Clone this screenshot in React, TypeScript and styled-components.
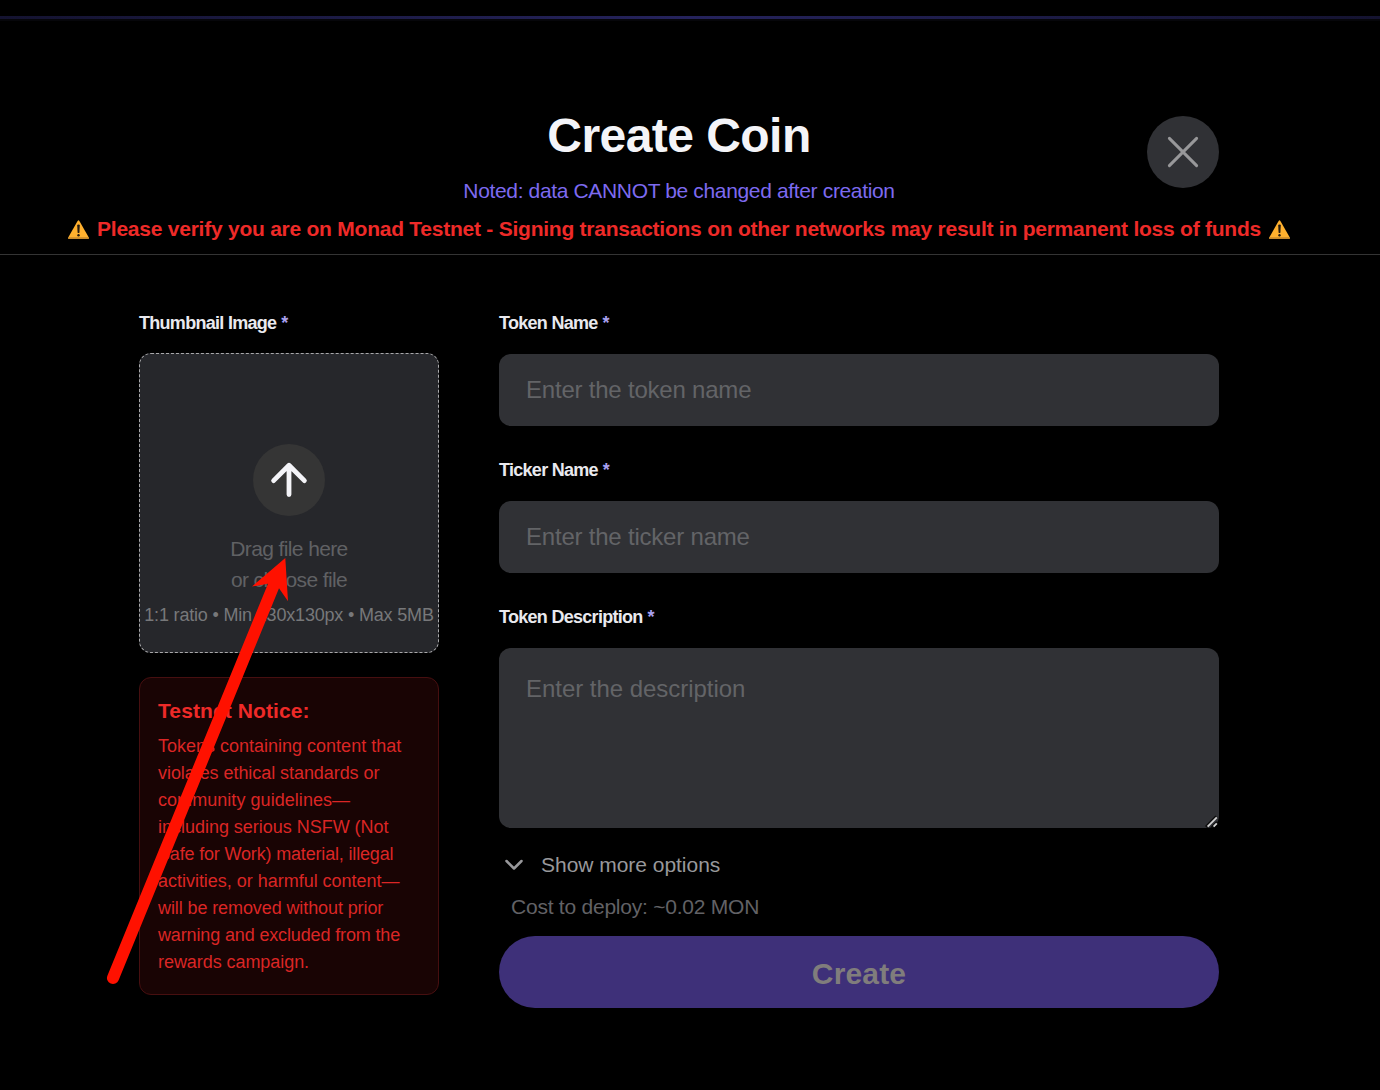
import styled, { createGlobalStyle } from "styled-components";

const GlobalStyle = createGlobalStyle`
  * {
    box-sizing: border-box;
  }

  body {
    margin: 0;
    background: #000;
    font-family: "Liberation Sans", Arial, sans-serif;
  }
`;

const Page = styled.div`
  position: relative;
  height: 1090px;
  padding-top: 16px;
  overflow: hidden;
  background: #000;
`;

const GlowLine = styled.div`
  height: 5px;
  border-bottom: 2px solid #06060a;
  background: linear-gradient(90deg, #141330 0%, #1d1c48 28%, #25235c 50%, #1d1c48 72%, #141330 100%);
`;

const Header = styled.header`
  padding: 87px 22px 10px 0;
  border-bottom: 1px solid #343434;
`;

const HeaderTop = styled.div`
  display: grid;
  grid-template-columns: 72px 1fr 72px;
  width: 1080px;
  margin: 0 auto;
`;

const Heading = styled.div`
  grid-column: 2;
  text-align: center;
`;

const Title = styled.h1`
  margin: 0;
  color: #f4f4f8;
  font-size: 48px;
  font-weight: 700;
  line-height: 56px;
  letter-spacing: -0.55px;
`;

const Subtitle = styled.p`
  margin: 11px 0 0;
  color: #7d6af0;
  font-size: 21px;
  line-height: 31px;
  letter-spacing: -0.35px;
`;

const CloseButton = styled.button`
  display: flex;
  align-items: center;
  justify-content: center;
  width: 72px;
  height: 72px;
  margin-top: 8px;
  padding: 0;
  border: none;
  border-radius: 50%;
  background: #303135;
`;

const Warning = styled.div`
  display: flex;
  align-items: center;
  justify-content: center;
  gap: 8px;
  margin-top: 7px;
  color: #ee2a28;
  font-size: 21px;
  font-weight: 700;
  line-height: 31px;
  letter-spacing: -0.242px;
  white-space: nowrap;

  svg {
    margin-top: 2px;
  }
`;

const Content = styled.main`
  display: flex;
  gap: 60px;
  width: 1080px;
  margin: 55px 0 0 139px;
`;

const Side = styled.div`
  display: flex;
  flex-direction: column;
  width: 300px;
`;

const Form = styled.form`
  display: flex;
  flex-direction: column;
  flex: 1;
`;

const Field = styled.div`
  display: flex;
  flex-direction: column;
  gap: 18px;
  margin-bottom: 31px;

  &:last-of-type {
    margin-bottom: 0;
  }
`;

const Label = styled.label`
  color: #e9e9ee;
  font-size: 18px;
  font-weight: 700;
  line-height: 26px;
  letter-spacing: -0.71px;

  span {
    margin-left: 0.5px;
    color: #a9a0f0;
  }
`;

const Input = styled.input`
  width: 100%;
  height: 72px;
  padding: 0 27px;
  border: none;
  border-radius: 12px;
  outline: none;
  background: #303135;
  color: #f4f4f8;
  font-family: inherit;
  font-size: 24px;
  letter-spacing: -0.21px;

  &::placeholder {
    color: #636467;
  }
`;

const TextAreaWrap = styled.div`
  position: relative;
  display: flex;
`;

const TextArea = styled.textarea`
  width: 100%;
  height: 180px;
  padding: 23px 27px;
  border: none;
  border-radius: 12px;
  outline: none;
  resize: none;
  background: #303135;
  color: #f4f4f8;
  font-family: inherit;
  font-size: 24px;
  line-height: 35px;
  letter-spacing: -0.04px;

  &::placeholder {
    color: #636467;
  }
`;

const ResizeGrip = styled.svg`
  position: absolute;
  right: 0;
  bottom: 0;
`;

const DropZone = styled.div`
  display: flex;
  flex-direction: column;
  align-items: center;
  justify-content: flex-end;
  height: 300px;
  margin-top: 17px;
  padding-bottom: 24px;
  border: 1px dashed #a9a9ab;
  border-radius: 12px;
  background: #26272b;
`;

const UploadIcon = styled.div`
  display: flex;
  align-items: center;
  justify-content: center;
  width: 72px;
  height: 72px;
  margin-bottom: 17px;
  border-radius: 50%;
  background: #353535;
`;

const DropText = styled.div`
  color: #606164;
  font-size: 21px;
  line-height: 31px;
  letter-spacing: -0.62px;
`;

const DropHint = styled.div`
  margin-top: 7px;
  color: #77787a;
  font-size: 18px;
  line-height: 26px;
  letter-spacing: -0.18px;
  white-space: nowrap;
`;

const Notice = styled.div`
  height: 318px;
  margin-top: 24px;
  padding: 17px 18px;
  border: 1px solid #470f10;
  border-radius: 12px;
  background: #190404;
`;

const NoticeTitle = styled.div`
  margin-bottom: 7px;
  color: #ee2a28;
  font-size: 21px;
  font-weight: 700;
  line-height: 31px;
  letter-spacing: 0.1px;
`;

const NoticeLine = styled.div<{ $spacing: number }>`
  color: #db2625;
  font-size: 18px;
  line-height: 27px;
  letter-spacing: ${(props) => props.$spacing}px;
  white-space: nowrap;
`;

const MoreOptions = styled.button`
  display: flex;
  align-items: center;
  gap: 18px;
  margin-top: 21px;
  padding: 0 0 0 6px;
  border: none;
  background: none;
  color: #98989b;
  font-family: inherit;
  font-size: 21px;
  line-height: 31px;
  letter-spacing: -0.03px;
`;

const Cost = styled.div`
  margin: 11px 0 14px;
  padding-left: 12px;
  color: #626266;
  font-size: 21px;
  line-height: 31px;
  letter-spacing: -0.23px;
`;

const CreateButton = styled.button`
  height: 72px;
  padding: 3px 0 0;
  border: none;
  border-radius: 36px;
  background: #3e3079;
  color: #807d7c;
  font-family: inherit;
  font-size: 30px;
  font-weight: 700;
  letter-spacing: 0.15px;
`;

const Pointer = styled.svg`
  position: absolute;
  top: 0;
  left: 0;
  pointer-events: none;
`;

const noticeLines = [
  { text: "Tokens containing content that", spacing: 0 },
  { text: "violates ethical standards or", spacing: -0.06 },
  { text: "community guidelines—", spacing: 0.05 },
  { text: "including serious NSFW (Not", spacing: -0.02 },
  { text: "Safe for Work) material, illegal", spacing: -0.17 },
  { text: "activities, or harmful content—", spacing: -0.02 },
  { text: "will be removed without prior", spacing: -0.1 },
  { text: "warning and excluded from the", spacing: -0.14 },
  { text: "rewards campaign.", spacing: -0.06 },
];

const WarningIcon = () => (
  <svg width="21" height="19" viewBox="0 0 21 19">
    <path d="M9.6 0.9Q10.5-0.3 11.4 0.9L20.8 17.6Q21 19 20 19H1Q0 19 0.2 17.6Z" fill="#ffb02e" />
    <path d="M0.5 17.2H20.5L20.8 17.9Q21 19 20 19H1Q0 19 0.2 17.9Z" fill="#c98a2b" />
    <path d="M9.2 5.2Q9.2 4.4 10.5 4.4Q11.8 4.4 11.8 5.2L11.4 12.4Q11.3 13 10.5 13Q9.7 13 9.6 12.4Z" fill="#241a10" />
    <circle cx="10.5" cy="15.3" r="1.2" fill="#241a10" />
  </svg>
);

const App = () => {
  return (
    <>
      <GlobalStyle />
      <Page>
        <GlowLine />
        <Header>
          <HeaderTop>
            <Heading>
              <Title>Create Coin</Title>
              <Subtitle>Noted: data CANNOT be changed after creation</Subtitle>
            </Heading>
            <CloseButton type="button" aria-label="Close">
              <svg width="36" height="36" viewBox="0 0 36 36" fill="none" stroke="#98989a" strokeWidth="3" strokeLinecap="round">
                <path d="M4.4 4.4L31.6 31.6M31.6 4.4L4.4 31.6" />
              </svg>
            </CloseButton>
          </HeaderTop>
          <Warning>
            <WarningIcon />
            <span>
              Please verify you are on Monad Testnet - Signing transactions on other networks may result in permanent loss of funds
            </span>
            <WarningIcon />
          </Warning>
        </Header>

        <Content>
          <Side>
            <Label>
              Thumbnail Image <span>*</span>
            </Label>
            <DropZone>
              <UploadIcon>
                <svg width="40" height="40" viewBox="0 0 40 40" fill="none" stroke="#f4f4f8" strokeWidth="4.8" strokeLinecap="round" strokeLinejoin="round">
                  <path d="M20 34.5V5.5M4.6 20.6L20 5.2L35.4 20.6" />
                </svg>
              </UploadIcon>
              <DropText>Drag file here</DropText>
              <DropText>or choose file</DropText>
              <DropHint>1:1 ratio • Min 130x130px • Max 5MB</DropHint>
            </DropZone>
            <Notice>
              <NoticeTitle>Testnet Notice:</NoticeTitle>
              {noticeLines.map((line) => (
                <NoticeLine key={line.text} $spacing={line.spacing}>
                  {line.text}
                </NoticeLine>
              ))}
            </Notice>
          </Side>

          <Form>
            <Field>
              <Label htmlFor="name">
                Token Name <span>*</span>
              </Label>
              <Input id="name" type="text" placeholder="Enter the token name" />
            </Field>
            <Field>
              <Label htmlFor="ticker">
                Ticker Name <span>*</span>
              </Label>
              <Input id="ticker" type="text" placeholder="Enter the ticker name" />
            </Field>
            <Field as="section">
              <Label htmlFor="description">
                Token Description <span>*</span>
              </Label>
              <TextAreaWrap>
                <TextArea id="description" placeholder="Enter the description" />
                <ResizeGrip width="14" height="14" viewBox="0 0 14 14" fill="none">
                  <path d="M1 13L11.5 2.5M7 13.5L12.4 8.2" stroke="#0c0c0c" strokeWidth="3" />
                  <path d="M2.6 12.6L11.8 3.4M8.6 12.6L11.8 9.4" stroke="#d0d0d0" strokeWidth="1.9" />
                </ResizeGrip>
              </TextAreaWrap>
            </Field>
            <MoreOptions type="button">
              <svg width="18" height="12" viewBox="0 0 18 12" fill="none" stroke="#98989b" strokeWidth="2.5" strokeLinecap="round" strokeLinejoin="round">
                <path d="M1.5 2L9 9.5L16.5 2" />
              </svg>
              Show more options
            </MoreOptions>
            <Cost>Cost to deploy: ~0.02 MON</Cost>
            <CreateButton type="button">Create</CreateButton>
          </Form>
        </Content>

        <Pointer width="1380" height="1090" viewBox="0 0 1380 1090">
          <path
            d="M107.4 975.7L268 583.7L252 586.5L285.3 558L288 601.3L279 588.3L118.6 980.3A6 6 0 0 1 107.4 975.7Z"
            fill="#ff1100"
          />
        </Pointer>
      </Page>
    </>
  );
};

export default App;
